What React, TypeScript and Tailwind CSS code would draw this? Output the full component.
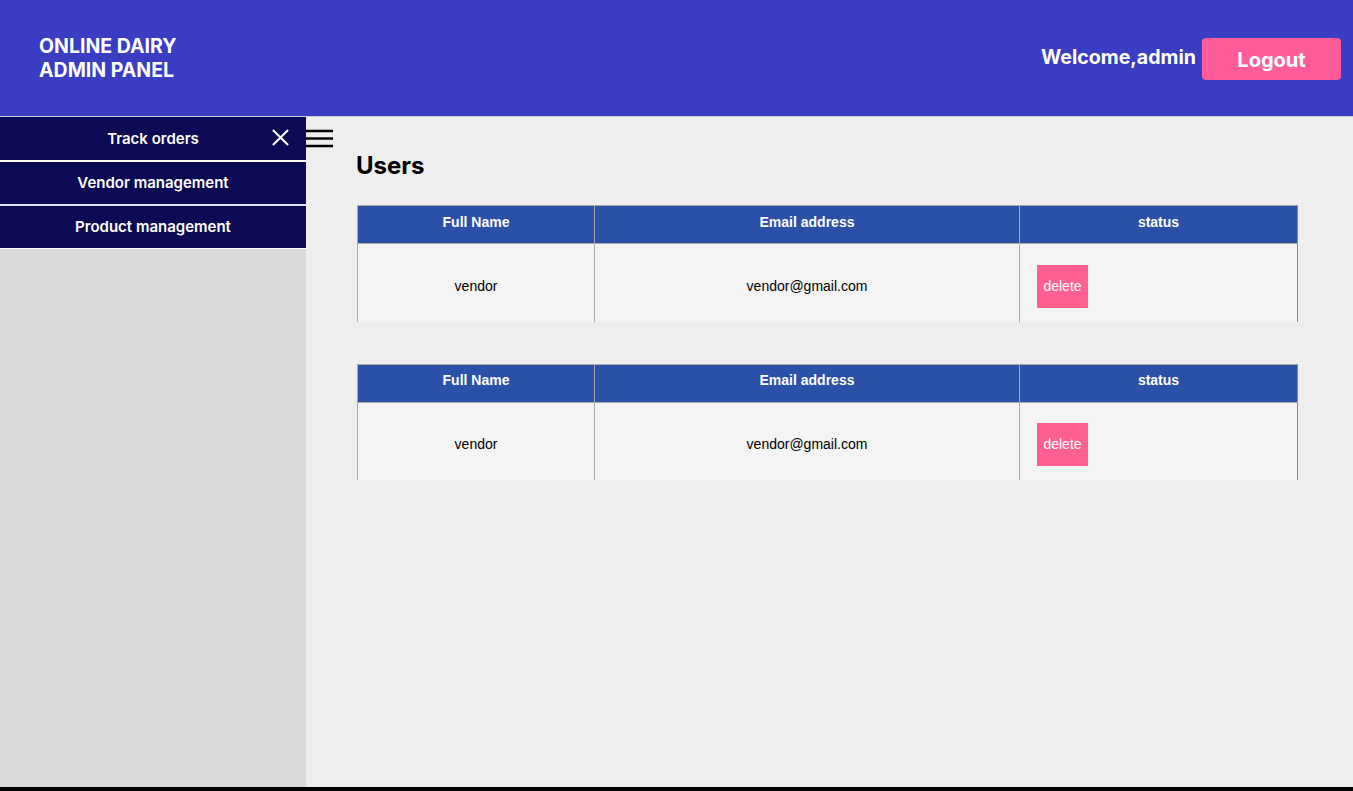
import React from "react";

interface UserRow {
  name: string;
  email: string;
}

const users: UserRow[] = [{name: "vendor", email: "vendor@gmail.com"}];

function UsersTable(props: { rows: UserRow[] }) {
  return (
    <table className="w-[941px] border-collapse font-['Liberation_Sans',Arial,sans-serif] text-[14px]">
      <thead>
        <tr className="h-[38px] bg-[#2a50a8] text-white">
          <th className="w-[237px] border border-[#a9a9a9] pb-[5px] font-bold">Full Name</th>
          <th className="w-[425px] border border-[#a9a9a9] pb-[5px] font-bold">Email address</th>
          <th className="border border-[#a9a9a9] border-r-[#888] pb-[5px] font-bold">status</th>
        </tr>
      </thead>
      <tbody>
        {props.rows.map((row: UserRow, index: number) => (
          <tr key={`user-row-${index}`} className="h-[78px] bg-[#f4f4f4] text-black">
            <td className="border-x border-[#a9a9a9] pt-[7px] text-center">{row.name}</td>
            <td className="border-x border-[#a9a9a9] pt-[7px] text-center">{row.email}</td>
            <td className="border-x border-[#a9a9a9] border-r-[#888] pl-[17px] pt-[7px]">
              <button className="h-[43px] w-[51px] bg-[#ff6090] text-white">delete</button>
            </td>
          </tr>
        ))}
      </tbody>
    </table>
  );
}

export default function App() {
  return (
    <div className="flex h-[791px] flex-col bg-[#eeeeee] font-['Inter',sans-serif]">
      <header className="flex h-[117px] shrink-0 items-center justify-between border-b border-[#c8c8d8] bg-[#3a3cc2] pl-[39px] pr-[12px] text-white">
        <h1 className="-mt-[1px] text-[19.5px] font-bold leading-[24px]">
          ONLINE DAIRY<br/>ADMIN PANEL
        </h1>
        <div className="flex items-center gap-[6px]">
          <span className="text-[19.6px] font-bold">Welcome,admin</span>
          <button className="mt-[1px] h-[42px] w-[139px] rounded-[4px] bg-[#ff5c9a] pt-[2px] text-[20px] font-bold">Logout</button>
        </div>
      </header>
      <div className="flex flex-1">
        <aside className="w-[306px] shrink-0 bg-[#d9d9d9]">
          <nav className="flex flex-col text-[15px] font-semibold text-white">
            <div className="relative flex h-[45px] items-center justify-center border-b-2 border-white bg-[#0d0a55] pt-[2px]">
              Track orders
              <svg className="absolute right-[16px] top-[11px] h-[19px] w-[19px]" viewBox="0 0 20 20" fill="none" stroke="white" strokeWidth="2.2">
                <path d="M2 2 L18 18 M18 2 L2 18"/>
              </svg>
            </div>
            <div className="flex h-[44px] items-center justify-center border-b-2 border-[#e4e4ee] bg-[#0d0a55]">
              Vendor management
            </div>
            <div className="flex h-[43px] items-center justify-center border-b border-white bg-[#0d0a55]">
              Product management
            </div>
          </nav>
        </aside>
        <main className="relative flex-1 pl-[51px]">
          <svg className="absolute left-0 top-[12px] h-[20px] w-[27px]" viewBox="0 0 27 20">
            <path d="M0 2 H27 M0 9.5 H27 M0 17 H27" stroke="black" strokeWidth="2.4"/>
          </svg>
          <h2 className="mt-[34px] -ml-[1px] text-[24px] font-bold leading-[30px] text-black">Users</h2>
          <div className="mt-[24px] flex flex-col gap-[42px]">
            <UsersTable rows={users}/>
            <UsersTable rows={users}/>
          </div>
        </main>
      </div>
      <div className="h-[4px] shrink-0 bg-black"></div>
    </div>
  );
}
